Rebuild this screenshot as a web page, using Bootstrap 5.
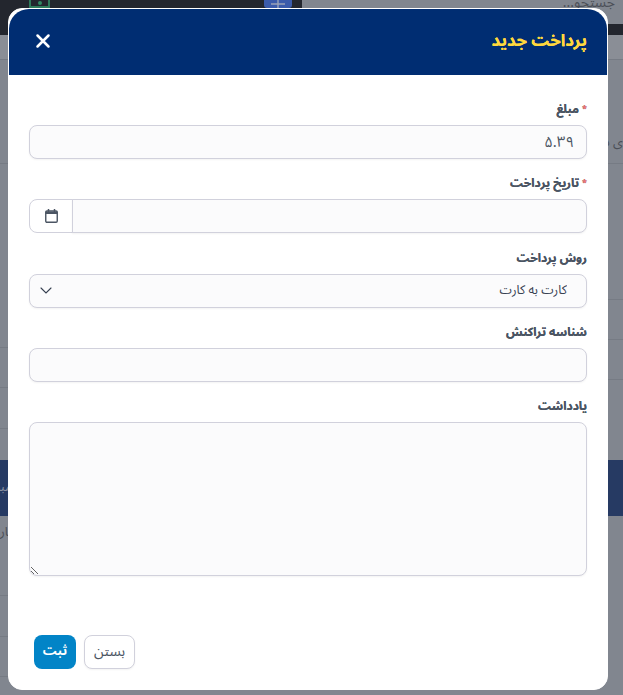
<!doctype html>
<html lang="fa" dir="rtl">
<head>
<meta charset="utf-8">
<title>پرداخت جدید</title>
<link href="https://cdn.jsdelivr.net/npm/bootstrap@5.3.0/dist/css/bootstrap.min.css" rel="stylesheet">
<style>
html,body{height:695px;overflow:hidden}
body{background:#81868f;font-family:"Noto Sans Arabic","Noto Naskh Arabic","DejaVu Sans",sans-serif;color:#4b5563}
.pg-top{height:35px;background:#23262e}
.pg-top-side{width:321px;height:24px;background:#81868f;color:#4b4f57;font-size:14px;line-height:14px;padding-right:8px;overflow:hidden}
.pg-top-side span{display:block;margin-top:-4px}
.pg-top-dark{width:302px;height:35px;padding:0 10px 0 0;overflow:hidden}
.pg-green{width:21px;height:20px;margin:-12px 0 0 29px;border:2px solid #2f7a5a;display:flex;align-items:flex-end;justify-content:center;padding-bottom:1px}
.pg-green i{width:4px;height:4px;border-radius:50%;background:#2f8a62;display:block}
.pg-blue{width:28px;height:20px;margin-top:-12px;background:#3b5bab;border-radius:0 0 3px 3px;display:flex;align-items:flex-end;justify-content:center}
.pg-mid{height:425px}
.pg-col{width:60px}
.pg-line{border-bottom:1px solid #767b84}
.pg-first{background:#8a8e96}
.h25{height:25px}.h104{height:104px}.h184{height:184px}.h40{height:40px}.h41{height:41px}.h136{height:136px}.h46{height:46px}
.pg-cell{color:#4b4f57;font-size:13px;white-space:nowrap;display:flex;align-items:center}
.pg-side-text{padding-top:62px}
.pg-band{height:56px;background:#263a63;color:#8b92a3;font-size:13px}
.pg-edge{width:12px;white-space:nowrap}
.pg-low{height:179px}
.pg-low-text{height:34px;color:#4b4f57;font-size:13px}
.pay-modal{left:8px;top:8px;width:600px;height:681.5px;z-index:1055}
.pay-content{height:100%;border-radius:14px;border:1px solid #fff;background:#fff}
.pay-head{height:66px;background:#002d72;border-radius:20px 20px 0 0;padding:0 20px 3px 26px;border:0}
.pay-title{color:#ffd83d;font-size:16.7px;font-weight:700;text-shadow:0 0 .5px #ffd83d}
.pay-close{width:16px;height:16px;background:none;border:0;padding:0;line-height:0}
.pay-body{padding:26px 20px 0}
.pay-label{font-size:12px;font-weight:700;color:#4b5563;margin-bottom:6px;line-height:18px;display:block;text-shadow:0 0 .4px #4b5563}
.pay-star{color:#f87171;font-size:9px;vertical-align:top;margin-left:3px}
.pay-field{height:34px;background-color:#fbfbfc;border:1px solid #d1d1dc;border-radius:8px;font-size:15px;color:#4b5563;box-shadow:0 1px 2px rgba(0,0,0,.05)}
.pay-field:focus{background-color:#fbfbfc}
.pay-gap{margin-bottom:16.25px}
.pay-group .pay-field{border-radius:0 8px 8px 0!important}
.pay-cal{width:44px;background:#fff;border:1px solid #d1d1dc;border-radius:8px 0 0 8px!important;padding:0;justify-content:center;margin-left:0!important;margin-right:-1px}
.pay-select{padding-right:19px;background-position:left 10px center;background-size:12px 7px;font-size:12.5px;color:#374151;background-image:url("data:image/svg+xml,%3csvg xmlns='http://www.w3.org/2000/svg' viewBox='0 0 12 7'%3e%3cpath fill='none' stroke='%23374151' stroke-width='1.1' stroke-linecap='round' d='M1 1l5 5 5-5'/%3e%3c/svg%3e")}
.pay-note{height:154px;resize:both}
.pay-foot{position:absolute;left:0;right:0;bottom:0;padding:0 0 20px 25px}
.pay-btn{height:34px;font-size:13px;border-radius:8px;padding:0}
.pay-save{width:42px;background:#0284c7;border:0;color:#fff;font-weight:700}
.pay-cancel{width:51px;background:#fff;border:1px solid #d1d1dc;color:#4b5563;box-shadow:0 1px 2px rgba(0,0,0,.05);font-size:14px}
</style>
</head>
<body>
<div class="pg-top d-flex">
<div class="pg-top-side"><span>جستجو...</span></div>
<div class="pg-top-dark d-flex justify-content-between align-items-start">
<div class="pg-blue"><svg width="14" height="8" viewBox="0 0 14 8"><path d="M0 4h14M7 0v8" stroke="#9aa3b8" stroke-width="1.4"/></svg></div>
<div class="pg-green"><i></i></div>
</div>
</div>
<div class="pg-mid d-flex justify-content-between">
<div class="pg-col">
<div class="pg-line pg-first h25"></div>
<div class="pg-line h104 pg-cell"><span class="pg-side-text">ی دوره</span></div>
<div class="pg-line h136"></div>
<div class="pg-line h40"></div>
<div class="pg-line h40"></div>
</div>
<div class="pg-col">
<div class="pg-line pg-first h25"></div>
<div class="pg-line h104"></div>
<div class="pg-line h184"></div>
<div class="pg-line h40"></div>
<div class="pg-line h41"></div>
</div>
</div>
<div class="pg-band d-flex justify-content-end align-items-center"><div class="pg-edge">مبلغ</div></div>
<div class="pg-low d-flex flex-column align-items-end">
<div class="pg-col">
<div class="pg-low-text d-flex align-items-center justify-content-end"><div class="pg-edge">بار</div></div>
<div class="pg-line h46"></div>
<div class="pg-line h41"></div>
<div class="pg-line h40"></div>
</div>
</div>
<div class="pay-modal position-absolute">
<div class="modal-content pay-content position-relative">
<div class="modal-header pay-head d-flex justify-content-between align-items-center">
<h5 class="modal-title pay-title">پرداخت جدید</h5>
<button class="pay-close" type="button" aria-label="بستن"><svg width="16" height="16" viewBox="0 0 16 16"><path d="M2.5 2.5 13.5 13.5M13.5 2.5 2.5 13.5" stroke="#fff" stroke-width="2.5" stroke-linecap="round"/></svg></button>
</div>
<div class="modal-body pay-body">
<form>
<div class="pay-gap"><label class="pay-label"><span class="pay-star">*</span>مبلغ</label><input class="form-control pay-field" value="۵.۳۹"></div>
<div class="pay-gap"><label class="pay-label"><span class="pay-star">*</span>تاریخ پرداخت</label>
<div class="input-group pay-group"><input class="form-control pay-field"><span class="input-group-text pay-cal"><svg width="13" height="14" viewBox="0 0 13 14"><rect x=".75" y="2" width="11.5" height="11.25" rx="1.2" fill="#fff" stroke="#4b5563" stroke-width="1.4"/><path d="M.5 2.5h12V5H.5z" fill="#4b5563"/><path d="M3.5 0v3M9.5 0v3" stroke="#4b5563" stroke-width="1.5"/></svg></span></div></div>
<div class="pay-gap"><label class="pay-label">روش پرداخت</label><select class="form-select pay-field pay-select"><option>کارت به کارت</option></select></div>
<div class="pay-gap"><label class="pay-label">شناسه تراکنش</label><input class="form-control pay-field"></div>
<div><label class="pay-label">یادداشت</label><textarea class="form-control pay-field pay-note"></textarea></div>
</form>
</div>
<div class="pay-foot d-flex gap-2 justify-content-end">
<button type="button" class="btn pay-btn pay-cancel">بستن</button>
<button type="button" class="btn pay-btn pay-save">ثبت</button>
</div>
</div>
</div>
<script src="https://cdn.jsdelivr.net/npm/bootstrap@5.3.0/dist/js/bootstrap.bundle.min.js"></script>
</body>
</html>
